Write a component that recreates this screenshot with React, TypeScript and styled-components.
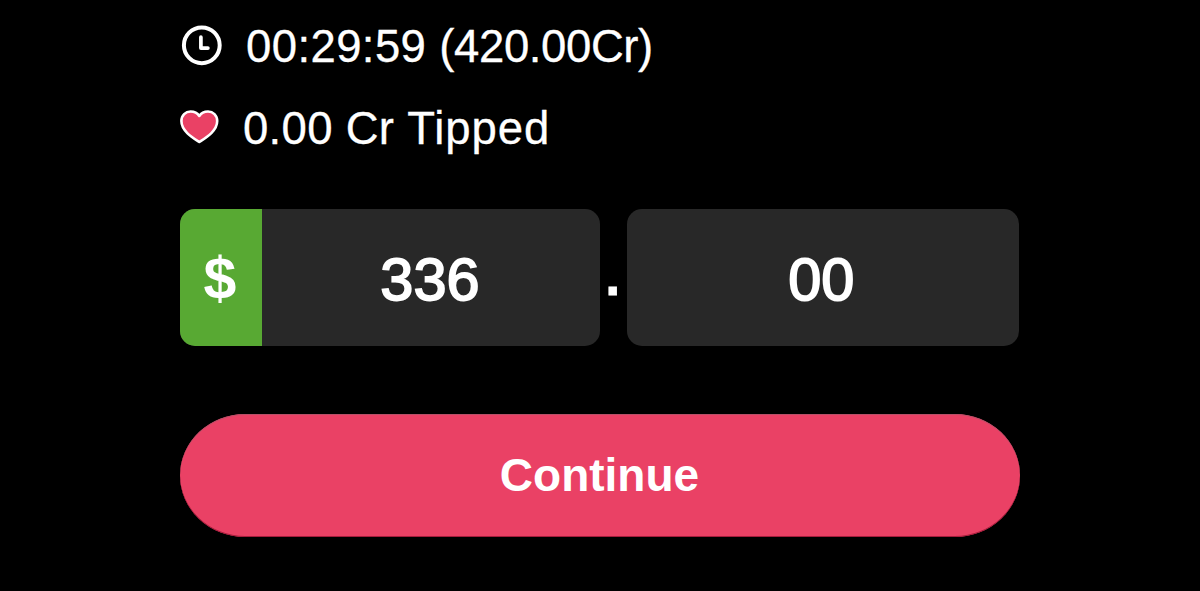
import React, { FC, ReactNode } from "react";
import styled, { createGlobalStyle, css } from "styled-components";

const colors = {
  background: "#000000",
  field: "#282828",
  green: "#58a933",
  pink: "#ea4165",
  white: "#ffffff",
};

const GlobalStyle = createGlobalStyle`
  *, *::before, *::after {
    box-sizing: border-box;
  }

  body {
    margin: 0;
    background: ${colors.background};
    color: ${colors.white};
    font-family: "Liberation Sans", Arial, Helvetica, sans-serif;
  }
`;

const center = css`
  display: flex;
  align-items: center;
  justify-content: center;
`;

const Page = styled.main`
  display: flex;
  flex-direction: column;
  width: 840px;
  height: 591px;
  margin: 0 auto;
  padding-top: 5px;
  overflow: hidden;
`;

const Stat = styled.div`
  display: flex;
  align-items: center;
  height: 82px;
`;

const StatIcon = styled.svg<{ $gap: number }>`
  flex: none;
  display: block;
  width: 42px;
  height: 42px;
  margin-right: ${({ $gap }) => $gap}px;
`;

const StatText = styled.span`
  padding-top: 2px;
  font-size: 45.5px;
  line-height: 52px;
  white-space: pre;
  -webkit-text-stroke: 0.3px ${colors.white};
`;

const Tracked = styled.span<{ $spacing: number }>`
  letter-spacing: ${({ $spacing }) => $spacing}px;
`;

const AmountRow = styled.div`
  display: flex;
  width: 839px;
  height: 136.5px;
  margin-top: 40px;
`;

const Field = styled.div<{ $width: number }>`
  display: flex;
  width: ${({ $width }) => $width}px;
  height: 100%;
  border-radius: 15px;
  background: ${colors.field};
  overflow: hidden;
`;

const Currency = styled.span`
  ${center};
  width: 82px;
  padding: 3px 2px 0 0;
  background: ${colors.green};
  font-size: 59px;
  font-weight: 700;
`;

const Value = styled.span<{ $shift?: number }>`
  ${center};
  flex: 1;
  padding-top: 4px;
  padding-right: ${({ $shift = 2 }) => $shift}px;
  font-size: 59.5px;
  -webkit-text-stroke: 1.8px ${colors.white};
`;

const Separator = styled.span`
  ${center};
  width: 26.5px;
  padding: 0 1px 3px 0;
  font-size: 54px;
  font-weight: 700;
  -webkit-text-stroke: 0.8px ${colors.white};
`;

const ContinueButton = styled.button`
  ${center};
  width: 840px;
  height: 123px;
  margin-top: 68px;
  padding: 0 1px 1px 0;
  border: 0;
  border-radius: 65px / 61.5px;
  background: ${colors.pink};
  box-shadow: inset 0 1px 0 #b85068, inset 0 -1px 0 #a51c3b;
  color: inherit;
  font-family: inherit;
  font-size: 46px;
  font-weight: 700;
`;

const ClockIcon: FC = () => (
  <StatIcon $gap={24} viewBox="0 0 42 42" fill="none" stroke={colors.white}>
    <circle cx="21.8" cy="20.3" r="17.9" strokeWidth="4" />
    <path
      d="M20.9 12.2v10.9h7"
      strokeWidth="3.7"
      strokeLinecap="round"
      strokeLinejoin="round"
    />
  </StatIcon>
);

const HeartIcon: FC = () => (
  <StatIcon $gap={21} viewBox="0 0 42 42">
    <path
      d="M19.3 35C13 30.9 1.4 24.2 1.4 14.1C1.4 8.2 5.6 4.5 10.6 4.5C14.2 4.5 17.5 6.2 19.3 9C21.1 6.2 24.4 4.5 28 4.5C33 4.5 37.2 8.2 37.2 14.1C37.2 24.2 25.6 30.9 19.3 35Z"
      fill={colors.pink}
      stroke={colors.white}
      strokeWidth="2.6"
      strokeLinejoin="round"
    />
  </StatIcon>
);

type StatRowProps = {
  icon: ReactNode;
  children: ReactNode;
};

const StatRow: FC<StatRowProps> = ({ icon, children }) => (
  <Stat>
    {icon}
    <StatText>{children}</StatText>
  </Stat>
);

const App: FC = () => (
  <>
    <GlobalStyle />
    <Page>
      <StatRow icon={<ClockIcon />}>
        <Tracked $spacing={0.4}>00:29:59 </Tracked>
        <Tracked $spacing={-0.4}>(420.00Cr)</Tracked>
      </StatRow>
      <StatRow icon={<HeartIcon />}>
        <Tracked $spacing={0.3}>0.00 Cr </Tracked>
        <Tracked $spacing={0.9}>Tipped</Tracked>
      </StatRow>
      <AmountRow>
        <Field $width={420}>
          <Currency>$</Currency>
          <Value>336</Value>
        </Field>
        <Separator>.</Separator>
        <Field $width={392.5}>
          <Value $shift={3}>00</Value>
        </Field>
      </AmountRow>
      <ContinueButton type="button">Continue</ContinueButton>
    </Page>
  </>
);

export default App;
